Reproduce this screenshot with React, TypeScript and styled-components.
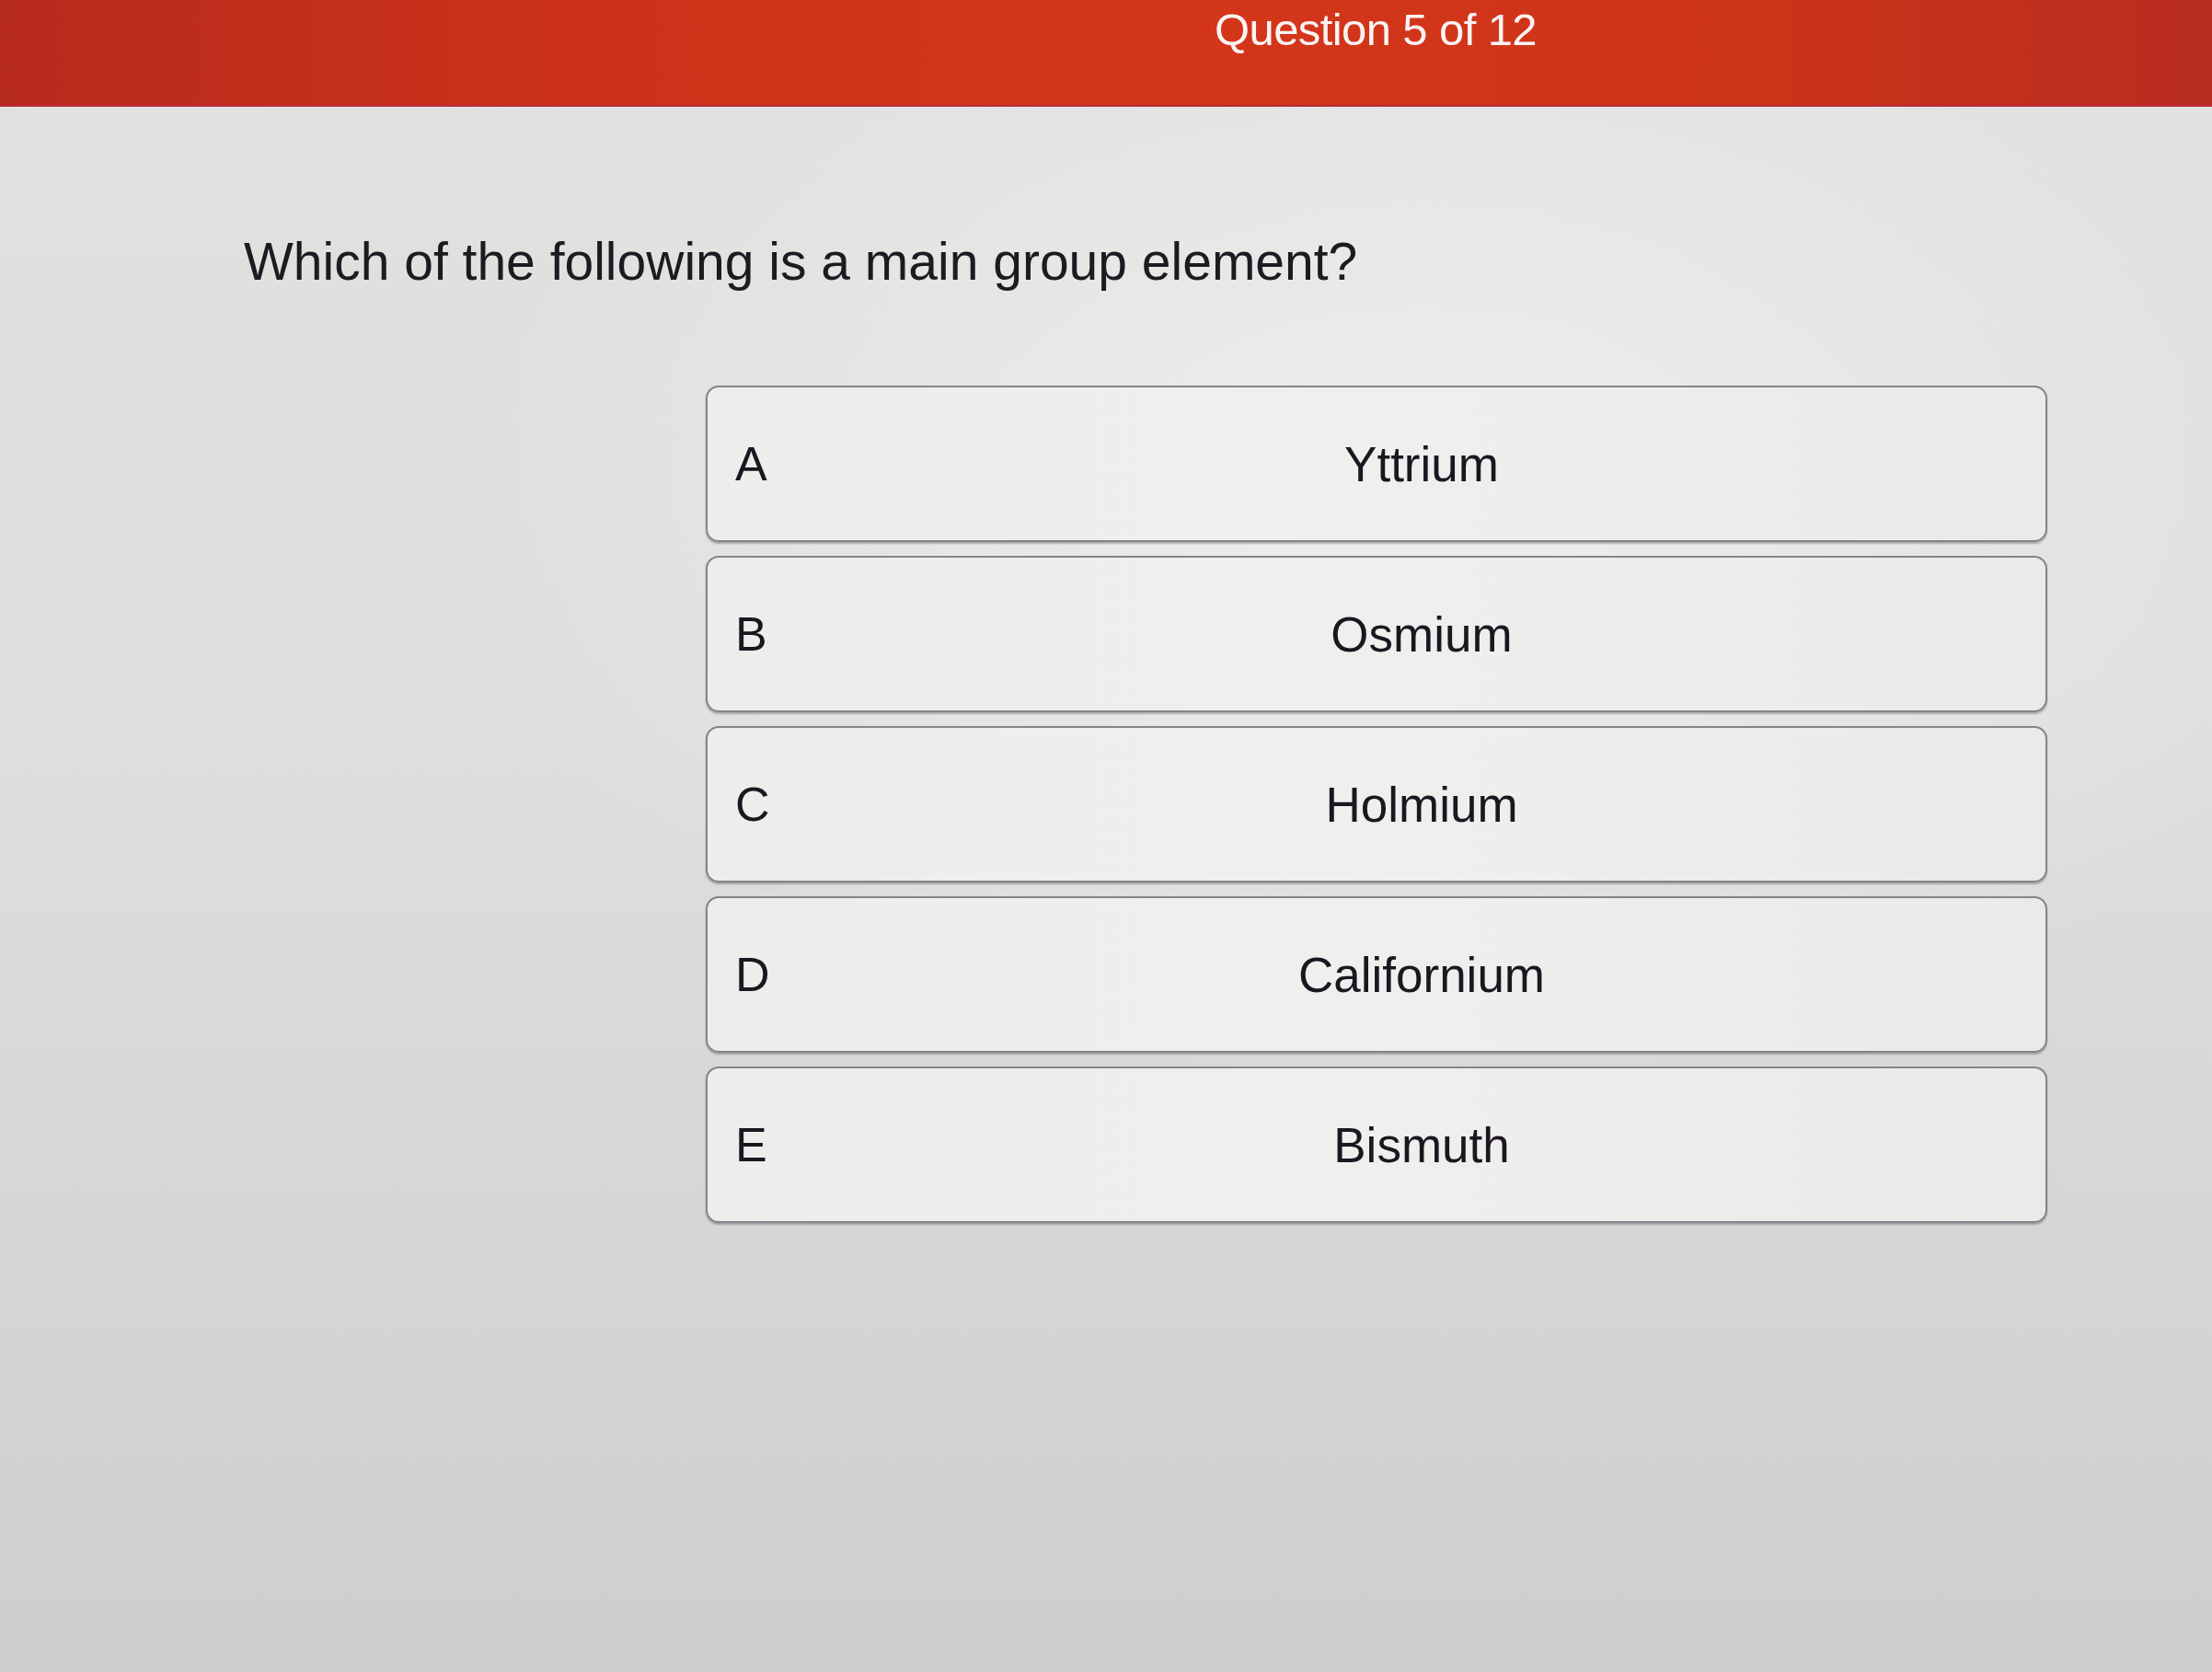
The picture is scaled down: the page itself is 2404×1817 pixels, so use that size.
import React from "react";
import styled, { createGlobalStyle } from "styled-components";

const GlobalStyle = createGlobalStyle`
  html, body {
    margin: 0;
    padding: 0;
  }
  body {
    font-family: "Liberation Sans", Arial, sans-serif;
    background: #d8d8d6;
  }
  * { box-sizing: border-box; }
`;

const Page = styled.div`
  width: 2404px;
  height: 1817px;
  overflow: hidden;
  display: flex;
  flex-direction: column;
  background:
    radial-gradient(ellipse 1500px 900px at 1550px 550px, rgba(240, 240, 238, 0.9), rgba(240, 240, 238, 0) 70%),
    linear-gradient(180deg, #e1e1df 0%, #dededc 45%, #d4d4d2 80%, #cececc 100%);
`;

const Header = styled.header`
  height: 116px;
  flex: none;
  display: flex;
  justify-content: center;
  align-items: flex-start;
  padding: 8px 0 0 586px;
  background: linear-gradient(90deg, #b72b1d 0%, #cb3219 25%, #d4361a 55%, #cc3419 80%, #b82d20 100%);
  border-bottom: 2px solid #b62a3a;
`;

const HeaderTitle = styled.div`
  color: #fbf4f4;
  font-size: 49px;
  line-height: 1;
  letter-spacing: -0.6px;
`;

const Main = styled.main`
  display: flex;
  flex-direction: column;
  padding-top: 140px;
`;

const Question = styled.h1`
  margin: 0 0 0 265px;
  font-weight: 400;
  font-size: 57px;
  line-height: 1;
  color: #1d1a22;
`;

const Options = styled.div`
  margin: 106px 0 0 767px;
  width: 1458px;
  display: flex;
  flex-direction: column;
  gap: 15px;
`;

const OptionCard = styled.div`
  height: 170px;
  display: flex;
  align-items: center;
  padding-left: 30px;
  border: 2px solid #85848a;
  border-radius: 14px;
  background: linear-gradient(90deg, #ededec 0%, #efefee 50%, #eaeae9 100%);
  box-shadow: 0 2px 2px rgba(60, 60, 70, 0.35);
  color: #1c1620;
`;

const OptionLetter = styled.span`
  width: 68px;
  flex: none;
  font-size: 52px;
  line-height: 1;
`;

const OptionText = styled.span`
  flex: 1;
  text-align: center;
  font-size: 53px;
  line-height: 1;
`;

const options = [
  { letter: "A", text: "Yttrium" },
  { letter: "B", text: "Osmium" },
  { letter: "C", text: "Holmium" },
  { letter: "D", text: "Californium" },
  { letter: "E", text: "Bismuth" },
];

export default function App() {
  return (
    <>
      <GlobalStyle />
      <Page>
        <Header>
          <HeaderTitle>Question 5 of 12</HeaderTitle>
        </Header>
        <Main>
          <Question>Which of the following is a main group element?</Question>
          <Options>
            {options.map((o) => (
              <OptionCard key={o.letter}>
                <OptionLetter>{o.letter}</OptionLetter>
                <OptionText>{o.text}</OptionText>
              </OptionCard>
            ))}
          </Options>
        </Main>
      </Page>
    </>
  );
}
